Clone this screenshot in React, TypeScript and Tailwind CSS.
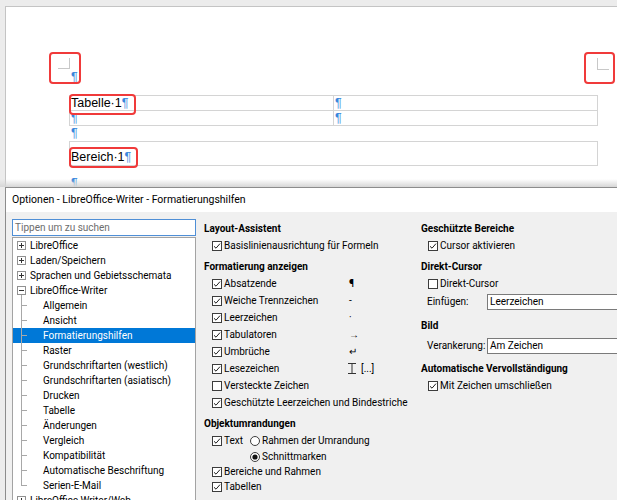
import React from 'react';

const Pil = () => <span className="text-[#3a87dc]">¶</span>;

function Box({ on }: { on?: boolean }) {
    return (
        <svg width="10" height="10" viewBox="0 0 10 10" className="shrink-0">
            <rect x="0.5" y="0.5" width="9" height="9" fill="#fff" stroke="#3c3c3c" />
            {on && <path d="M2 5.3 L4 7.2 L8 2.6" fill="none" stroke="#1e1e1e" strokeWidth="1" />}
        </svg>
    );
}

function Radio({ on }: { on?: boolean }) {
    return (
        <svg width="10" height="10" viewBox="0 0 10 10" className="shrink-0">
            <circle cx="5" cy="5" r="4.5" fill="#fff" stroke="#3c3c3c" />
            {on && <circle cx="5" cy="5" r="2.6" fill="#111" />}
        </svg>
    );
}

function Expander({ open }: { open?: boolean }) {
    return (
        <svg width="9" height="9" viewBox="0 0 9 9" className="shrink-0">
            <rect x="0.5" y="0.5" width="8" height="8" fill="#fff" stroke="#919191" />
            <path d="M2 4.5 H7" stroke="#333" />
            {!open && <path d="M4.5 2 V7" stroke="#333" />}
        </svg>
    );
}

const Heading = ({ children, className = '' }: { children: React.ReactNode; className?: string }) => (
    <div className={`flex h-[17px] items-center whitespace-nowrap font-bold ${className}`}>{children}</div>
);

const Check = ({ label, on = true, pad = 'pl-[8px]' }: { label: string; on?: boolean; pad?: string }) => (
    <div className={`flex h-[17px] items-center whitespace-nowrap ${pad}`}>
        <Box on={on} />
        <span className="ml-[2px]">{label}</span>
    </div>
);

const SymRow = ({ label, sym, on = true }: { label: string; sym: React.ReactNode; on?: boolean }) => (
    <div className="flex h-[17px] items-center whitespace-nowrap pl-[8px]">
        <Box on={on} />
        <span className="ml-[2px] w-[125px] shrink-0">{label}</span>
        <span className="flex items-center">{sym}</span>
    </div>
);

const roots = ['LibreOffice', 'Laden/Speichern', 'Sprachen und Gebietsschemata'];
const children = [
    'Allgemein',
    'Ansicht',
    'Formatierungshilfen',
    'Raster',
    'Grundschriftarten (westlich)',
    'Grundschriftarten (asiatisch)',
    'Drucken',
    'Tabelle',
    'Änderungen',
    'Vergleich',
    'Kompatibilität',
    'Automatische Beschriftung',
    'Serien-E-Mail',
];

export default function App() {
    return (
        <div className="h-[500px] w-[617px] overflow-hidden bg-[#ececec]">
            {/* Dokument */}
            <div className="relative h-[187px] overflow-hidden pl-[5px] pt-[6px]">
                <div className="relative h-[200px] border-l border-t border-[#c4c4c4] bg-white font-['Liberation_Sans',Arial,sans-serif] text-[12.5px] leading-[14px] text-black">
                    <div className="ml-[52px] mt-[51px] flex w-[551px] items-start justify-between">
                        <div className="h-[11px] w-[12px] border-b border-r border-[#c8c8c8]" />
                        <div className="h-[12px] w-[12px] border-b border-l border-[#c8c8c8]" />
                    </div>
                    <div className="ml-[63px] w-[529px]">
                        <div className="h-[14px] pl-[2px]"><Pil /></div>
                        <div className="mt-[11px] border border-[#d4d4d4]">
                            <div className="grid grid-cols-[263px_1fr] border-b border-[#d4d4d4]">
                                <div className="h-[14px] pl-[1px]">Tabelle·1<Pil /></div>
                                <div className="h-[14px] border-l border-[#d4d4d4] pl-[1px]"><Pil /></div>
                            </div>
                            <div className="grid grid-cols-[263px_1fr]">
                                <div className="h-[14px] pl-[1px]"><Pil /></div>
                                <div className="h-[14px] border-l border-[#d4d4d4] pl-[1px]"><Pil /></div>
                            </div>
                        </div>
                        <div className="h-[14px] pl-[2px]"><Pil /></div>
                        <div className="mt-[1px] border border-[#d4d4d4] pb-[1px] pt-[8px]">
                            <div className="h-[14px] pl-[1px]">Bereich·1<Pil /></div>
                        </div>
                        <div className="mt-[10px] h-[14px] pl-[2px]"><Pil /></div>
                    </div>

                    {/* Markierungen */}
                    <div className="absolute left-[43px] top-[45px] h-[32px] w-[32px] rounded-[4px] border-2 border-[#f03a3a]" />
                    <div className="absolute left-[578px] top-[45px] h-[32px] w-[31px] rounded-[4px] border-2 border-[#f03a3a]" />
                    <div className="absolute left-[63px] top-[87px] h-[21px] w-[67px] rounded-[4px] border-2 border-[#f03a3a]" />
                    <div className="absolute left-[63px] top-[140px] h-[21px] w-[69px] rounded-[4px] border-2 border-[#f03a3a]" />
                </div>
                <div className="absolute bottom-0 left-0 h-[8px] w-full bg-gradient-to-b from-transparent to-[#d6d6d6]" />
            </div>

            {/* Dialog */}
            <div className="ml-[5px] h-[313px] border-l border-t border-[#8c8c8c] font-['Roboto','Noto_Sans',sans-serif] text-[10px] text-black">
                <div className="flex h-[24px] items-center whitespace-nowrap bg-white pl-[6px] text-[10.5px]">
                    Optionen - LibreOffice-Writer - Formatierungshilfen
                </div>
                <div className="flex h-[289px] bg-[#f0f0f0]">
                    {/* Navigation */}
                    <div className="ml-[6px] flex w-[184px] shrink-0 flex-col whitespace-nowrap pt-[7px]">
                        <div className="flex h-[17px] items-center border border-[#4f8fd6] bg-white pl-[2px] text-[#6d6d6d]">
                            Tippen um zu suchen
                        </div>
                        <div className="mt-[1px] flex-1 overflow-hidden border border-[#a3a3a3] bg-white">
                            {roots.map((r) => (
                                <div key={r} className="flex h-[15px] items-center gap-[4px] pl-[4px]">
                                    <Expander />
                                    <span>{r}</span>
                                </div>
                            ))}
                            <div className="relative flex h-[15px] items-center gap-[4px] pl-[4px]">
                                <Expander open />
                                <span>LibreOffice-Writer</span>
                                <span className="absolute left-[8px] top-[12px] h-[3px] w-px bg-[#a8a8a8]" />
                            </div>
                            {children.map((c, i) => {
                                const sel = c === 'Formatierungshilfen';
                                const last = i === children.length - 1;
                                return (
                                    <div
                                        key={c}
                                        className={`relative flex h-[15px] items-center pl-[30px] ${sel ? 'bg-[#0078d7] text-white' : ''}`}
                                    >
                                        <span className={`absolute left-[8px] top-0 w-px bg-[#a8a8a8] ${last ? 'h-[8px]' : 'h-[15px]'}`} />
                                        <span className="absolute left-[8px] top-[7px] h-px w-[6px] bg-[#a8a8a8]" />
                                        <span>{c}</span>
                                    </div>
                                );
                            })}
                            <div className="flex h-[15px] items-center gap-[4px] pl-[4px]">
                                <Expander />
                                <span>LibreOffice Writer/Web</span>
                            </div>
                        </div>
                    </div>

                    {/* Einstellungen */}
                    <div className="ml-[8px] flex shrink-0 pt-[8px]">
                        <div className="w-[217px] shrink-0">
                            <Heading>Layout-Assistent</Heading>
                            <Check label="Basislinienausrichtung für Formeln" />
                            <Heading className="mt-[4px]">Formatierung anzeigen</Heading>
                            <SymRow label="Absatzende" sym={<span className="font-bold">¶</span>} />
                            <SymRow label="Weiche Trennzeichen" sym="-" />
                            <SymRow label="Leerzeichen" sym="·" />
                            <SymRow label="Tabulatoren" sym="→" />
                            <SymRow label="Umbrüche" sym="↵" />
                            <SymRow
                                label="Lesezeichen"
                                sym={
                                    <>
                                        <svg width="10" height="11" viewBox="0 0 10 11" className="-ml-[2px]">
                                            <path d="M1 0.5 H9 M5 0.5 V10.5 M1 10.5 H9" stroke="#333" fill="none" />
                                        </svg>
                                        <span className="ml-[4px]">[...]</span>
                                    </>
                                }
                            />
                            <Check label="Versteckte Zeichen" on={false} />
                            <Check label="Geschützte Leerzeichen und Bindestriche" />
                            <Heading className="mt-[4px]">Objektumrandungen</Heading>
                            <div className="flex h-[17px] items-center whitespace-nowrap pl-[8px]">
                                <Box on />
                                <span className="ml-[2px] w-[26px]">Text</span>
                                <Radio />
                                <span className="ml-[2px]">Rahmen der Umrandung</span>
                            </div>
                            <div className="flex h-[15px] items-center pl-[46px]">
                                <Radio on />
                                <span className="ml-[2px]">Schnittmarken</span>
                            </div>
                            <div className="flex h-[15px] items-center pl-[8px]">
                                <Box on />
                                <span className="ml-[2px]">Bereiche und Rahmen</span>
                            </div>
                            <div className="flex h-[15px] items-center pl-[8px]">
                                <Box on />
                                <span className="ml-[2px]">Tabellen</span>
                            </div>
                        </div>

                        <div className="w-[220px] shrink-0">
                            <Heading>Geschützte Bereiche</Heading>
                            <Check label="Cursor aktivieren" pad="pl-[7px]" />
                            <Heading className="mt-[4px]">Direkt-Cursor</Heading>
                            <Check label="Direkt-Cursor" on={false} pad="pl-[7px]" />
                            <div className="flex h-[19px] items-center pl-[6px]">
                                <span className="w-[60px] shrink-0">Einfügen:</span>
                                <div className="flex h-[16px] w-[150px] shrink-0 items-center border border-[#7a7a7a] bg-white pl-[2px]">Leerzeichen</div>
                            </div>
                            <Heading className="mt-[6px]">Bild</Heading>
                            <div className="mt-[2px] flex h-[19px] items-center pl-[6px]">
                                <span className="w-[60px] shrink-0">Verankerung:</span>
                                <div className="flex h-[16px] w-[150px] shrink-0 items-center border border-[#7a7a7a] bg-white pl-[2px]">Am Zeichen</div>
                            </div>
                            <Heading className="mt-[5px]">Automatische Vervollständigung</Heading>
                            <Check label="Mit Zeichen umschließen" pad="pl-[7px]" />
                        </div>
                    </div>
                </div>
            </div>
        </div>
    );
}
